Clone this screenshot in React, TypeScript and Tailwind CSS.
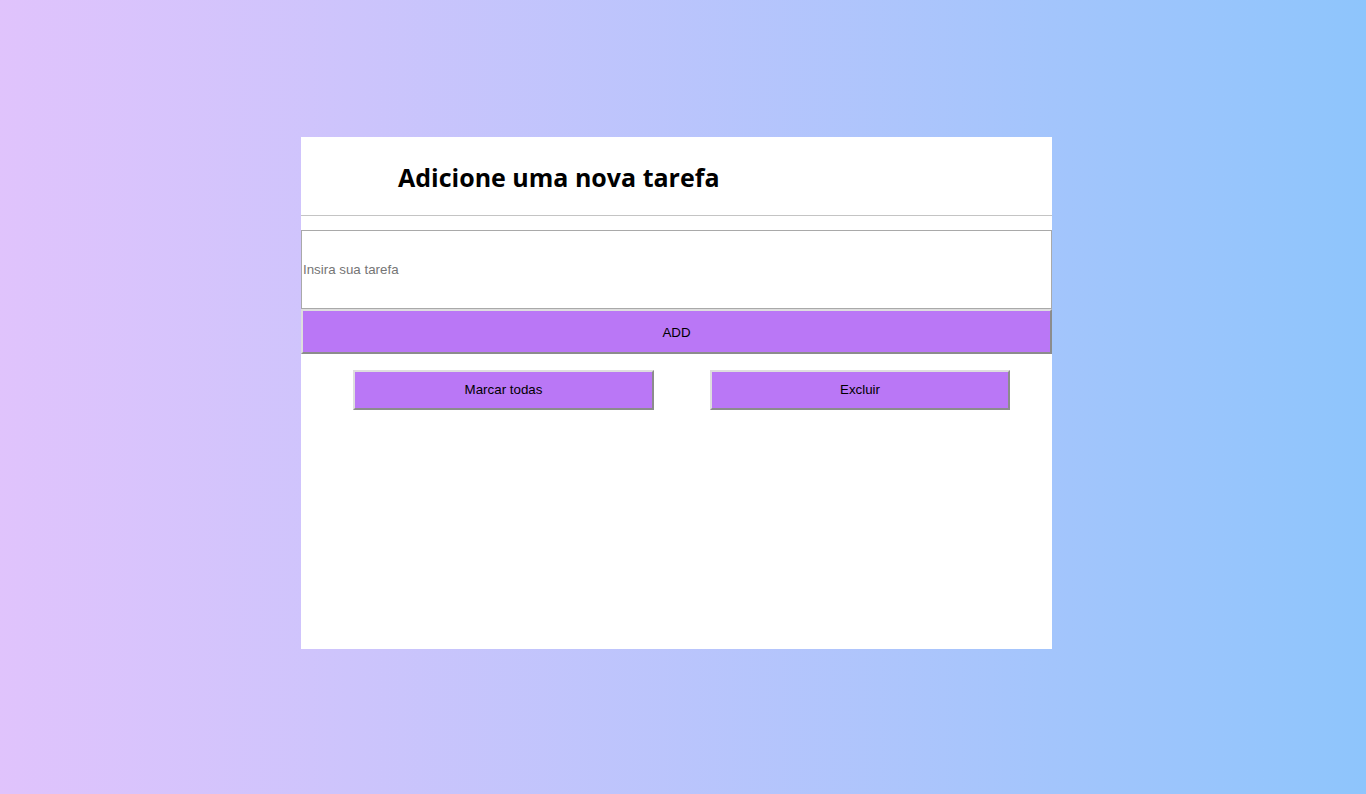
import { useState } from 'react'

const btn =
  'bg-[#ba77f6] text-black text-[13.333px] border-2 border-t-[#dedede] border-l-[#dedede] border-b-[#8c8c8c] border-r-[#8c8c8c]'

export default function App() {
  const [task, setTask] = useState('')

  return (
    <div className="min-h-[794px] w-full bg-gradient-to-r from-[#e0c3fc] to-[#8ec5fc] pt-[137px] font-['Liberation_Sans',Arial,sans-serif]">
      <div className="ml-[301px] w-[751px] h-[512px] bg-white">
        <div className="h-[79px] flex items-center pl-[97px] border-b border-[#c4c4c4]">
          <h1 className="font-['Open_Sans',sans-serif] font-bold text-[25px] text-black leading-none pt-[2px]">
            Adicione uma nova tarefa
          </h1>
        </div>
        <div className="pt-[14px]">
          <input
            value={task}
            onChange={(e) => setTask(e.target.value)}
            placeholder="Insira sua tarefa"
            className="block w-full h-[79px] border border-[#a9a9a9] px-[1px] text-[13.333px] placeholder:text-[#757575] outline-none"
          />
          <button className={`${btn} block w-full h-[45px] pt-[2px]`}>ADD</button>
        </div>
        <div className="flex justify-between pl-[52px] pt-[16px] pr-[42px]">
          <button className={`${btn} w-[301px] h-[40px]`}>Marcar todas</button>
          <button className={`${btn} w-[300px] h-[40px]`}>Excluir</button>
        </div>
      </div>
    </div>
  )
}
